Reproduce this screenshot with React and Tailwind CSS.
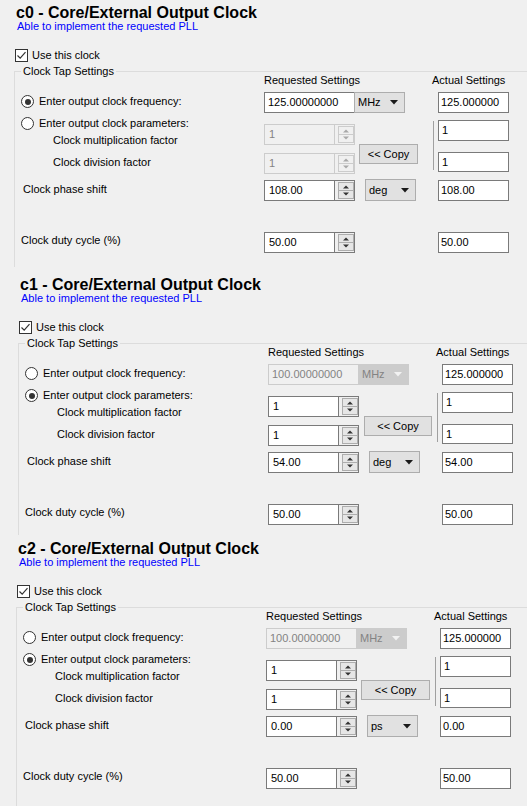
import React from "react";

function Checkbox() {
  return (
    <div className="w-[13px] h-[13px] border border-[#333333] bg-white flex items-center justify-center">
      <svg width="11" height="11" viewBox="0 0 11 11">
        <path d="M1.5 5.5 L4.2 8.2 L9.5 2.2" fill="none" stroke="#333333" strokeWidth="1.2" />
      </svg>
    </div>
  );
}

function Radio({ checked }) {
  return (
    <div className="w-[13px] h-[13px] rounded-full border border-[#333333] bg-white flex items-center justify-center shrink-0">
      {checked && <div className="w-[6px] h-[6px] rounded-full bg-[#333333]" />}
    </div>
  );
}

function SpinButton({ disabled }) {
  const stroke = disabled ? "#cccccc" : "#adadad";
  const fill = disabled ? "#f0f0f0" : "#e6e6e6";
  const arrow = disabled ? "#a8a8a8" : "#333333";
  return (
    <svg width="16" height="17" viewBox="0 0 16 17">
      <rect x="0.5" y="0.5" width="15" height="16" fill={fill} stroke={stroke} />
      <line x1="1" y1="8.5" x2="15" y2="8.5" stroke={stroke} />
      <polygon points="5,6.5 11,6.5 8,3.5" fill={arrow} />
      <polygon points="5,10.5 11,10.5 8,13.5" fill={arrow} />
    </svg>
  );
}

function Spin({ value, disabled, cls }) {
  return (
    <div
      className={`w-[91px] flex border ${cls} ${
        disabled ? "border-[#cccccc] bg-[#f0f0f0] text-[#838383]" : "border-[#7a7a7a] bg-white text-black"
      }`}
    >
      <div
        className={`w-[70px] flex items-center pl-[4px] border-r ${
          disabled ? "border-[#cccccc]" : "border-[#7a7a7a]"
        }`}
      >
        {value}
      </div>
      <div className="flex-1 flex items-center justify-end bg-[#f0f0f0]">
        <SpinButton disabled={disabled} />
      </div>
    </div>
  );
}

function Arrow({ color }) {
  return (
    <svg width="8" height="5" viewBox="0 0 8 5">
      <polygon points="0,0 8,0 4,4.5" fill={color} />
    </svg>
  );
}

function Dropdown({ label, disabled, cls }) {
  return (
    <div
      className={`w-[51px] flex items-center pl-[3px] pr-[6px] border ${cls} ${
        disabled ? "bg-[#cccccc] border-[#cccccc] text-[#838383]" : "bg-[#e1e1e1] border-[#adadad] text-black"
      }`}
    >
      <span>{label}</span>
      <span className="ml-auto flex">
        <Arrow color={disabled ? "#f2f2f2" : "#1a1a1a"} />
      </span>
    </div>
  );
}

function TextBox({ value, cls, disabled }) {
  return (
    <div
      className={`flex items-center border ${cls} ${
        disabled ? "border-[#cccccc] bg-[#f0f0f0] text-[#838383]" : "border-[#7a7a7a] bg-white text-black"
      }`}
    >
      {value}
    </div>
  );
}

function Section({ s }) {
  return (
    <div className={`${s.cls} overflow-hidden`}>
      <div className="ml-[16px] pt-[3px] text-[16px] leading-[19px] font-bold text-black whitespace-nowrap">
        {s.name} - Core/External Output Clock
      </div>
      <div className="ml-[17px] -mt-[2px] leading-[13px] text-[#0000ff] whitespace-nowrap">
        Able to implement the requested PLL
      </div>
      <div className="ml-[15px] mt-[16px] h-[13px] flex items-center gap-[4px]">
        <Checkbox />
        <span className="leading-[13px]">Use this clock</span>
      </div>
      <div className={`ml-[14px] mt-[9px] relative border-t border-l border-[#dcdcdc] ${s.groupCls}`}>
        <span className="absolute -top-[7px] left-[6px] px-[2px] bg-[#f0f0f0] leading-[13px] whitespace-nowrap">
          Clock Tap Settings
        </span>
        <div className="flex">
          {/* labels */}
          <div className="w-[249px] flex flex-col leading-[13px] whitespace-nowrap">
            <div className="mt-[23px] ml-[6px] h-[13px] flex items-center gap-[5px]">
              <Radio checked={s.freqMode} />
              <span>Enter output clock frequency:</span>
            </div>
            <div className="mt-[9px] ml-[6px] h-[13px] flex items-center gap-[5px]">
              <Radio checked={!s.freqMode} />
              <span>Enter output clock parameters:</span>
            </div>
            <div className="mt-[4px] ml-[38px]">Clock multiplication factor</div>
            <div className="mt-[9px] ml-[38px]">Clock division factor</div>
            <div className="mt-[14px] ml-[8px]">Clock phase shift</div>
            <div className="mt-[38px] ml-[6px]">Clock duty cycle (%)</div>
          </div>
          {/* requested */}
          <div className="w-[91px] flex flex-col">
            <div className="mt-[2px] h-[13px] leading-[13px] whitespace-nowrap">Requested Settings</div>
            <TextBox
              value={s.reqFreq}
              disabled={!s.freqMode}
              cls="mt-[5px] h-[21px] w-[91px] pl-[3px]"
            />
            <Spin value={s.mult} disabled={s.freqMode} cls="mt-[11px] h-[21px]" />
            <Spin value={s.div} disabled={s.freqMode} cls="mt-[8px] h-[21px]" />
            <Spin value={s.phase} cls="mt-[6px] h-[21px]" />
            <Spin value={s.duty} cls="mt-[31px] h-[21px]" />
          </div>
          {/* middle */}
          <div className="w-[78px] flex flex-col">
            <Dropdown label="MHz" disabled={!s.freqMode} cls="mt-[20px] h-[21px] -ml-[1px]" />
            <div
              className={`mt-[31px] h-[20px] flex items-center justify-center bg-[#e1e1e1] border border-[#adadad] whitespace-nowrap ${s.copyCls}`}
            >
              {"<< Copy"}
            </div>
            <Dropdown label={s.unit} cls="mt-[15px] h-[22px] ml-[10px]" />
          </div>
          {/* separator */}
          <div className="w-[1px] mt-[49px] h-[49px] bg-[#a0a0a0]" />
          {/* actual */}
          <div className="ml-[4px] w-[71px] flex flex-col">
            <div className="mt-[2px] -ml-[6px] h-[13px] leading-[13px] whitespace-nowrap">Actual Settings</div>
            <TextBox value={s.aFreq} cls="mt-[5px] h-[21px] pl-[2px]" />
            <TextBox value={s.aMult} cls="mt-[7px] h-[21px] pl-[3px]" />
            <TextBox value={s.aDiv} cls="mt-[11px] h-[20px] pl-[3px]" />
            <TextBox value={s.aPhase} cls="mt-[8px] h-[21px] pl-[2px]" />
            <TextBox value={s.aDuty} cls="mt-[31px] h-[21px] pl-[2px]" />
          </div>
        </div>
      </div>
    </div>
  );
}

const sections = [
  {
    name: "c0",
    cls: "h-[272px] pl-[0px]",
    groupCls: "h-[196px]",
    freqMode: true,
    reqFreq: "125.00000000",
    mult: "1",
    div: "1",
    phase: "108.00",
    unit: "deg",
    duty: "50.00",
    aFreq: "125.000000",
    aMult: "1",
    aDiv: "1",
    aPhase: "108.00",
    aDuty: "50.00",
    copyCls: "ml-[4px] w-[59px]",
  },
  {
    name: "c1",
    cls: "h-[264px] pl-[4px]",
    groupCls: "h-[192px]",
    freqMode: false,
    reqFreq: "100.00000000",
    mult: "1",
    div: "1",
    phase: "54.00",
    unit: "deg",
    duty: "50.00",
    aFreq: "125.000000",
    aMult: "1",
    aDiv: "1",
    aPhase: "54.00",
    aDuty: "50.00",
    copyCls: "ml-[5px] w-[68px]",
  },
  {
    name: "c2",
    cls: "h-[270px] pl-[2px]",
    groupCls: "h-[260px]",
    freqMode: false,
    reqFreq: "100.00000000",
    mult: "1",
    div: "1",
    phase: "0.00",
    unit: "ps",
    duty: "50.00",
    aFreq: "125.000000",
    aMult: "1",
    aDiv: "1",
    aPhase: "0.00",
    aDuty: "50.00",
    copyCls: "ml-[4px] w-[69px]",
  },
];

export default function App() {
  return (
    <div className="w-[527px] h-[806px] overflow-hidden bg-[#f0f0f0] text-black text-[11px] font-['Liberation_Sans',Arial,sans-serif]">
      {sections.map((s) => (
        <Section key={s.name} s={s} />
      ))}
    </div>
  );
}
